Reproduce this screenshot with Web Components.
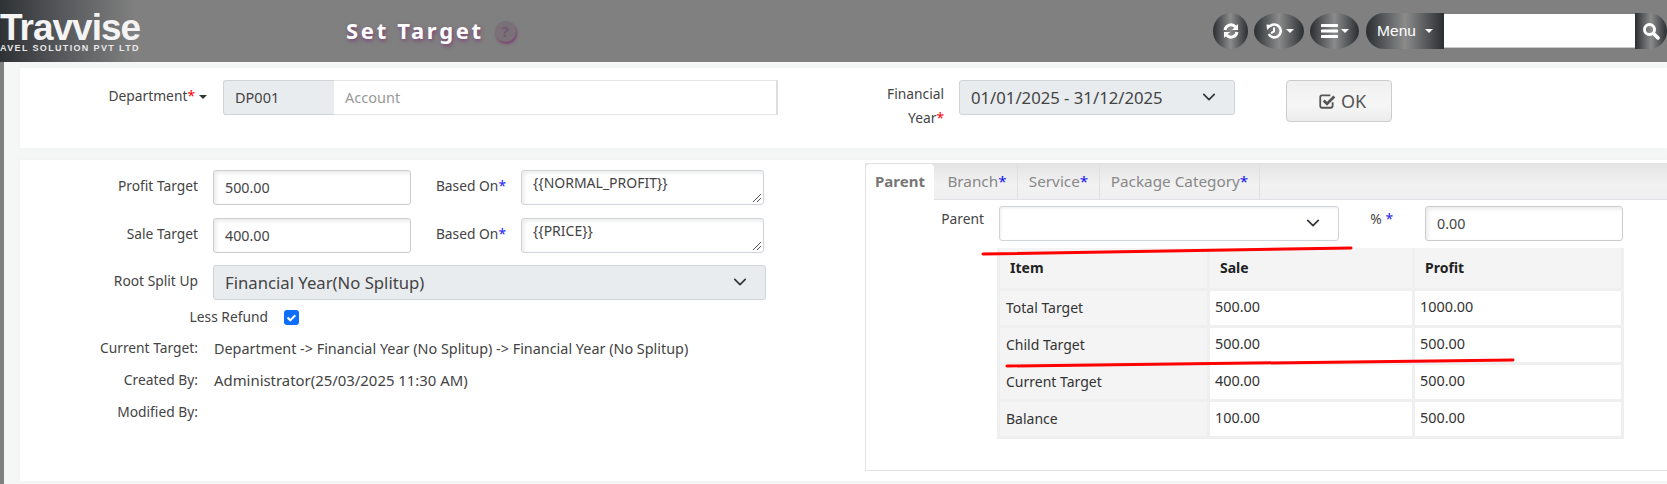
<!DOCTYPE html>
<html>
<head>
<meta charset="utf-8">
<title>Set Target</title>
<style>
  html, body { margin: 0; padding: 0; height: 484px; overflow: hidden; }
  body {
    background: #f5f7f6;
    font-family: "Noto Sans", "Open Sans", sans-serif;
    font-size: 13.8px;
    color: #444;
  }
</style>
</head>
<body>
<set-target-page></set-target-page>

<script>
const FIELD_FONT = `"Noto Sans", "Open Sans", sans-serif`;
const CHEVRON = `<svg width="14" height="14" viewBox="0 0 16 16"><path d="M2 5l6 6 6-6" fill="none" stroke="#343a40" stroke-width="2" stroke-linecap="round" stroke-linejoin="round"/></svg>`;

// top bar
class TopBar extends HTMLElement {
    constructor() {
        super();
        this.attachShadow({mode: 'open'});
        this.shadowRoot.innerHTML = `
        <style>
            :host { display: flex; align-items: center; height: 62px; background: #808080; overflow: hidden; color: #fff; }
            .logo { width: 170px; height: 62px; margin-right: 176px; flex: none; background: linear-gradient(90deg, #2f3235 0, #55575a 60px, #808080 135px); overflow: hidden; }
            .brand { font: bold 37px/33px "Liberation Sans", sans-serif; letter-spacing: -1px; margin: 11px 0 0; color: #f4f4f4; }
            .tag { font: bold 9px/10px "Liberation Sans", sans-serif; letter-spacing: 1.35px; margin: -1px 0 0; white-space: nowrap; color: #e8e8e8; }
            h1 { margin: 0 0 2px; font: bold 22px/30px ${FIELD_FONT}; letter-spacing: 2.7px; text-shadow: 1px 2px 4px #7a3f70; flex: none; }
            .help { width: 21px; height: 21px; border-radius: 50%; margin-left: 11px; background: #7a7078; color: #6f5a70; font: bold 15px/21px ${FIELD_FONT}; text-align: center; box-shadow: 1px 2px 3px #7a3f70; flex: none; }
            .tools { margin-left: auto; display: flex; align-items: center; height: 36px; }
            .btn { height: 36px; display: flex; align-items: center; justify-content: center; gap: 3px; background: linear-gradient(90deg, #2b2e31 0, #5b5d5f 25%, #8b8b8b 50%, #5b5d5f 75%, #2b2e31 100%); }
            .round { border-radius: 50%; margin-right: 6px; }
            .caret { width: 0; height: 0; border-left: 4px solid transparent; border-right: 4px solid transparent; border-top: 4px solid #fff; }
            .menu { width: 78px; border-radius: 18px 0 0 18px; font: 15.5px "Liberation Sans", sans-serif; gap: 9px; }
            .search { width: 191px; height: 34px; background: #fff; border-bottom: 1px solid #ccc; box-sizing: border-box; }
            .go { width: 32px; border-radius: 0 18px 18px 0; }
        </style>
        <div class="logo">
            <div class="brand">Travvise</div>
            <div class="tag">AVEL SOLUTION PVT LTD</div>
        </div>
        <h1>Set Target</h1>
        <div class="help">?</div>
        <div class="tools">
            <div class="btn round" style="width:35px">
                <svg width="18" height="18" viewBox="0 0 18 18" fill="none" stroke="#fff" stroke-width="3"><path d="M3 8a6 6 0 0 1 10.5-3"/><path d="M15 10a6 6 0 0 1-10.5 3"/><path d="M16 2v6h-6z" fill="#fff" stroke="none"/><path d="M2 16v-6h6z" fill="#fff" stroke="none"/></svg>
            </div>
            <div class="btn round" style="width:50px">
                <svg width="18" height="18" viewBox="0 0 18 18" fill="none" stroke="#fff" stroke-width="2.6"><path d="M5 4.2a6.4 6.4 0 1 1-1.2 8"/><path d="M9 5.5v4l-3 1.6" stroke-width="2"/><path d="M1.5 2.5l6 .5-5.5 5z" fill="#fff" stroke="none"/></svg>
                <span class="caret"></span>
            </div>
            <div class="btn round" style="width:49px;margin-right:7px">
                <svg width="17" height="14" viewBox="0 0 17 14" fill="#fff"><rect width="17" height="3" rx=".5"/><rect y="5.5" width="17" height="3" rx=".5"/><rect y="11" width="17" height="3" rx=".5"/></svg>
                <span class="caret"></span>
            </div>
            <div class="btn menu">Menu <span class="caret"></span></div>
            <div class="search"></div>
            <div class="btn go">
                <svg width="18" height="18" viewBox="0 0 18 18" fill="none" stroke="#fff"><circle cx="7.5" cy="7.5" r="5" stroke-width="3"/><path d="M11.5 11.5L16 16" stroke-width="3.5" stroke-linecap="round"/></svg>
            </div>
        </div>`;
    }
}
window.customElements.define('top-bar', TopBar);

// white section on the page
class FormPanel extends HTMLElement {
    constructor() {
        super();
        this.attachShadow({mode: 'open'});
        this.shadowRoot.innerHTML = `
        <style>
            :host { display: block; background: #fff; margin-left: 20px; box-sizing: border-box; box-shadow: 0 0 3px #eef0ef; }
        </style>
        <slot></slot>`;
    }
}
window.customElements.define('form-panel', FormPanel);

// label, right aligned to a fixed column edge
class FieldLabel extends HTMLElement {
    constructor() {
        super();
        this.attachShadow({mode: 'open'});
        this.shadowRoot.innerHTML = `
        <style>
            :host { display: block; text-align: right; color: #444; line-height: 31px; flex: none; }
            .req { color: #f00; }
            .blue { color: #2222ee; }
        </style>
        <slot></slot><span class="mark"></span><slot name="after"></slot>`;
    }
    connectedCallback() {
        const mark = this.shadowRoot.querySelector('.mark');
        if (this.getAttribute('req')) {
            mark.textContent = '*';
            mark.className = this.getAttribute('req') === 'blue' ? 'blue' : 'req';
        }
    }
}
window.customElements.define('field-label', FieldLabel);

// input-like box
class FieldBox extends HTMLElement {
    constructor() {
        super();
        this.attachShadow({mode: 'open'});
        this.shadowRoot.innerHTML = `
        <style>
            :host { display: flex; align-items: center; justify-content: space-between; box-sizing: border-box; height: 35px; padding: 0 11px; border: 1px solid #ccc; border-radius: 3px; background: #fff; color: #444; font-size: 14.3px; flex: none; white-space: nowrap; box-shadow: inset 2px 2px 4px #eaeaea; overflow: hidden; position: relative; }
            :host([kind="select"]) { background: #e9ecef; border-color: #ced4da; box-shadow: none; font-size: 16.7px; padding-right: 18px; }
            :host([kind="plain-select"]) { box-shadow: inset 1px 1px 3px #eee; border-color: #ced4da; padding-right: 18px; }
            :host([kind="addon"]) { background: #e9ecef; border-color: #ced4da; box-shadow: none; border-radius: 3px 0 0 3px; border-right: 0; font-size: 14.5px; padding-bottom: 2px; }
            :host([kind="ghost"]) { border: 1px solid #e6e6e6; border-right: 2px solid #ddd; border-left: 0; border-radius: 0; box-shadow: none; color: #999; font-size: 14.5px; padding-bottom: 2px; }
            :host([kind="area"]) { align-items: flex-start; padding-top: 2px; border-color: #ced4da; line-height: 20px; font-size: 14px; }
            .grip { position: absolute; right: 1px; bottom: 1px; }
            .arrow { display: none; height: 14px; margin-bottom: 1px; }
            .arrow svg { display: block; }
            :host([kind="select"]) .arrow, :host([kind="plain-select"]) .arrow { display: block; }
        </style>
        <span><slot></slot></span>
        <span class="arrow">${CHEVRON}</span>
        <svg class="grip" width="10" height="10" viewBox="0 0 10 10" stroke="#555" fill="none"><path d="M1 9l8-8M5 9l4-4"/></svg>`;
    }
    connectedCallback() {
        if (this.getAttribute('kind') !== 'area') {
            this.shadowRoot.querySelector('.grip').style.display = 'none';
        }
    }
}
window.customElements.define('field-box', FieldBox);

class OkButton extends HTMLElement {
    constructor() {
        super();
        this.attachShadow({mode: 'open'});
        this.shadowRoot.innerHTML = `
        <style>
            :host { display: flex; align-items: center; justify-content: center; gap: 5px; box-sizing: border-box; width: 106px; height: 42px; padding-left: 6px; border: 1px solid #ccc; border-radius: 4px; color: #555; font-size: 18px; background: linear-gradient(#f0f0f0, #f6f6f6 60%, #ececec); flex: none; }
        </style>
        <svg width="18" height="18" viewBox="0 0 16 16" fill="none"><path d="M13 9v3.5a1.5 1.5 0 0 1-1.5 1.500h-8A1.5 1.5 0 0 1 2 12.500v-8A1.5 1.5 0 0 1 3.500 3H11" stroke="#555" stroke-width="1.6"/><path d="M5 7.5l3 3 6.5-6.5" stroke="#555" stroke-width="2.4"/></svg>
        <slot></slot>`;
    }
}
window.customElements.define('ok-button', OkButton);

class TabStrip extends HTMLElement {
    constructor() {
        super();
        this.attachShadow({mode: 'open'});
        this.shadowRoot.innerHTML = `
        <style>
            :host { display: flex; height: 35px; background: linear-gradient(#e4e4e4, #f2f2f2 60%, #efefef); border-bottom: 1px solid #dee2e6; box-sizing: content-box; font-size: 15.3px; color: #888; }
            .tab { box-sizing: border-box; height: 35px; line-height: 34px; text-align: center; border-right: 1px solid #e0e0e0; flex: none; }
            .tab.on { background: #fff; font-weight: bold; color: #777; border-radius: 4px 4px 0 0; height: 36px; border: 0; margin-right: 3px; font-size: 15px; }
            b { color: #11e; font-weight: normal; }
        </style>
        <div class="tab on" style="width:68px">Parent</div>
        <div class="tab" style="width:81px">Branch<b>*</b></div>
        <div class="tab" style="width:82px">Service<b>*</b></div>
        <div class="tab" style="width:160px">Package Category<b>*</b></div>`;
    }
}
window.customElements.define('tab-strip', TabStrip);

class TargetTable extends HTMLElement {
    constructor() {
        super();
        this.attachShadow({mode: 'open'});
        this.shadowRoot.innerHTML = `
        <style>
            :host { display: block; width: 627px; margin-left: 131px; margin-top: 7px; }
            table { width: 100%; border-collapse: collapse; table-layout: fixed; color: #333; font-size: 14px; }
            th, td { border: 3px solid #efefef; padding: 0 0 0 6px; height: 37px; text-align: left; box-sizing: border-box; }
            th { background: #f4f4f4; height: 41px; color: #222; padding-left: 10px; border-top: 0; font-weight: bold; border-bottom: 0; border-left-color: #e4e4e4; }
            tr:first-child th:first-child { border-left-color: #efefef; }
            td:first-child { background: #f4f4f4; }
            td + td { font-size: 14.4px; padding-left: 5px; padding-bottom: 2px; }
        </style>
        <table>
            <colgroup><col style="width:210px"><col style="width:205px"><col></colgroup>
            <tr><th>Item</th><th>Sale</th><th>Profit</th></tr>
            <tr><td>Total Target</td><td>500.00</td><td>1000.00</td></tr>
            <tr><td>Child Target</td><td>500.00</td><td>500.00</td></tr>
            <tr><td>Current Target</td><td>400.00</td><td>500.00</td></tr>
            <tr><td>Balance</td><td>100.00</td><td>500.00</td></tr>
        </table>`;
    }
}
window.customElements.define('target-table', TargetTable);

// the whole page
class SetTargetPage extends HTMLElement {
    constructor() {
        super();
        this.attachShadow({mode: 'open'});
        this.shadowRoot.innerHTML = `
        <style>
            :host { display: block; height: 484px; position: relative; overflow: hidden; }
            .strip { position: absolute; left: 0; top: 62px; bottom: 0; width: 4px; background: #808080; }
            .row { display: flex; align-items: flex-start; }
            .top { margin-top: 6px; height: 80px; padding-top: 12px; box-sizing: border-box; }
            .bottom { margin-top: 12px; height: 321px; display: flex; }
            .left { width: 845px; flex: none; padding-top: 10px; box-sizing: border-box; }
            .left .row { margin-bottom: 13px; }
            .left field-label { width: 178px; margin-right: 15px; }
            .info { height: 32px; margin: 0 !important; align-items: center; }
            .info field-label { line-height: 32px; }
            .info span { font-size: 14.4px; margin-left: 1px; }
            .right { flex: none; width: 802px; height: 308px; margin-top: 3px; box-sizing: border-box; border: 1px solid #e2e2e2; border-right: 0; }
            .caret { display: inline-block; width: 0; height: 0; margin-left: 4px; vertical-align: 2px; border-left: 4px solid transparent; border-right: 4px solid transparent; border-top: 4px solid #333; }
            svg.line { position: absolute; left: 0; top: 0; pointer-events: none; }
        </style>
        <top-bar></top-bar>
        <div class="strip"></div>
        <form-panel class="row top">
            <div class="row">
                <field-label req="red" style="width:187px;margin-right:16px">Department<span slot="after" class="caret"></span></field-label>
                <field-box kind="addon" style="width:111px">DP001</field-box>
                <field-box kind="ghost" style="width:444px">Account</field-box>
                <field-label req="red" style="width:82px;margin:2px 15px 0 84px;line-height:24px">Financial<br>Year</field-label>
                <field-box kind="select" style="width:276px">01/01/2025 - 31/12/2025</field-box>
                <ok-button style="margin-left:51px">OK</ok-button>
            </div>
        </form-panel>
        <form-panel class="bottom">
            <div class="left">
                <div class="row">
                    <field-label>Profit Target</field-label>
                    <field-box style="width:198px">500.00</field-box>
                    <field-label req="blue" style="width:95px;margin-right:15px">Based On</field-label>
                    <field-box kind="area" style="width:243px">{{NORMAL_PROFIT}}</field-box>
                </div>
                <div class="row" style="margin-bottom:12px">
                    <field-label>Sale Target</field-label>
                    <field-box style="width:198px">400.00</field-box>
                    <field-label req="blue" style="width:95px;margin-right:15px">Based On</field-label>
                    <field-box kind="area" style="width:243px">{{PRICE}}</field-box>
                </div>
                <div class="row" style="margin-bottom:9px">
                    <field-label>Root Split Up</field-label>
                    <field-box kind="select" style="width:553px">Financial Year(No Splitup)</field-box>
                </div>
                <div class="row" style="margin:0 0 7px 0;align-items:center">
                    <field-label style="width:248px;margin-right:16px;line-height:16px">Less Refund</field-label>
                    <svg width="15" height="15" viewBox="0 0 15 15"><rect width="15" height="15" rx="3" fill="#0d6efd"/><path d="M3.5 7.5l2.8 2.8 5-5" fill="none" stroke="#fff" stroke-width="2"/></svg>
                </div>
                <div class="row info"><field-label>Current Target:</field-label><span>Department -&gt; Financial Year (No Splitup) -&gt; Financial Year (No Splitup)</span></div>
                <div class="row info"><field-label>Created By:</field-label><span style="font-size:14.9px">Administrator(25/03/2025 11:30 AM)</span></div>
                <div class="row info"><field-label>Modified By:</field-label></div>
            </div>
            <div class="right">
                <tab-strip></tab-strip>
                <div class="row" style="margin-top:6px">
                    <field-label style="width:118px;margin-right:15px;line-height:26px">Parent</field-label>
                    <field-box kind="plain-select" style="width:340px"></field-box>
                    <field-label req="blue" style="width:54px;margin-right:32px;line-height:26px">% </field-label>
                    <field-box style="width:198px">0.00</field-box>
                </div>
                <target-table></target-table>
            </div>
        </form-panel>
        <svg class="line" width="1667" height="484">
            <path d="M983 254 L1351 248" stroke="#f00" stroke-width="3" fill="none" stroke-linecap="round"/>
            <path d="M1007 366 L1513 360" stroke="#f00" stroke-width="3" fill="none" stroke-linecap="round"/>
        </svg>`;
    }
}
window.customElements.define('set-target-page', SetTargetPage);
</script>
</body>
</html>
